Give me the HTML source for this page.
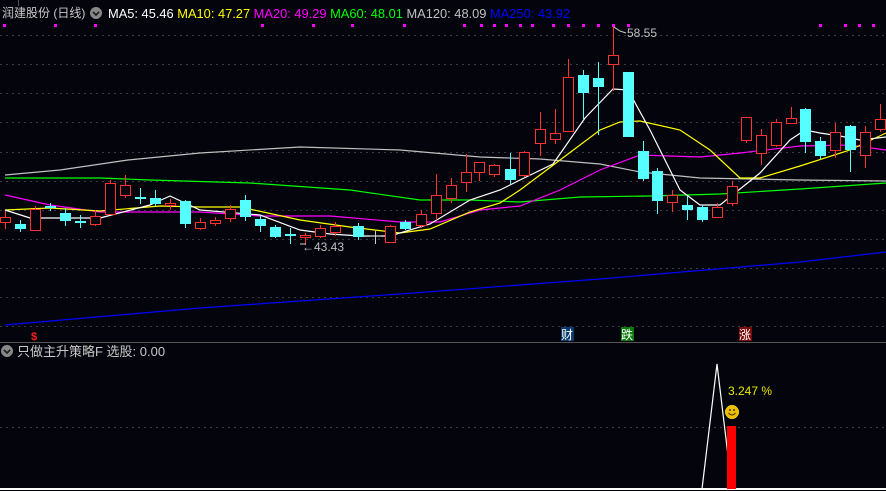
<!DOCTYPE html>
<html><head><meta charset="utf-8"><style>
html,body{margin:0;padding:0;background:#04040c;width:886px;height:491px;overflow:hidden}
svg{display:block}
text{font-family:"Liberation Sans","Noto Sans CJK SC",sans-serif}
</style></head><body>
<svg width="886" height="491" viewBox="0 0 886 491" xmlns="http://www.w3.org/2000/svg" shape-rendering="crispEdges">
<rect width="886" height="491" fill="#04040c"/>
<g stroke="#3a3a44" stroke-dasharray="2,4" stroke-width="1">
<line x1="0" y1="35.5" x2="886" y2="35.5"/><line x1="0" y1="64.5" x2="886" y2="64.5"/>
<line x1="0" y1="93.5" x2="886" y2="93.5"/><line x1="0" y1="122.5" x2="886" y2="122.5"/>
<line x1="0" y1="152.5" x2="886" y2="152.5"/><line x1="0" y1="181.5" x2="886" y2="181.5"/>
<line x1="0" y1="210.5" x2="886" y2="210.5"/><line x1="0" y1="239.5" x2="886" y2="239.5"/>
<line x1="0" y1="268.5" x2="886" y2="268.5"/><line x1="0" y1="297.5" x2="886" y2="297.5"/>
<line x1="0" y1="326.5" x2="886" y2="326.5"/><line x1="0" y1="427.5" x2="886" y2="427.5"/>
</g>
<line x1="0" y1="342.5" x2="886" y2="342.5" stroke="#555" />
<line x1="18.5" y1="0" x2="18.5" y2="6" stroke="#555"/>
<line x1="0" y1="489" x2="886" y2="489" stroke="#fff" stroke-width="2"/>
<g fill="#ff00ff">
<rect x="3" y="24" width="3" height="3"/><rect x="54" y="24" width="3" height="3"/><rect x="94" y="24" width="3" height="3"/><rect x="261" y="24" width="3" height="3"/><rect x="312" y="24" width="3" height="3"/><rect x="351" y="24" width="3" height="3"/><rect x="403" y="24" width="3" height="3"/><rect x="463" y="24" width="3" height="3"/><rect x="480" y="24" width="3" height="3"/><rect x="493" y="24" width="3" height="3"/><rect x="505" y="24" width="3" height="3"/><rect x="519" y="24" width="3" height="3"/><rect x="531" y="24" width="3" height="3"/><rect x="552" y="24" width="3" height="3"/><rect x="567" y="24" width="3" height="3"/><rect x="582" y="24" width="3" height="3"/><rect x="597" y="24" width="3" height="3"/><rect x="612" y="24" width="3" height="3"/><rect x="627" y="24" width="3" height="3"/><rect x="819" y="24" width="3" height="3"/><rect x="844" y="24" width="3" height="3"/><rect x="858" y="24" width="3" height="3"/><rect x="872" y="24" width="3" height="3"/>
</g>
<g fill="none" stroke-width="1.2" shape-rendering="auto">
<polyline stroke="#0000ff" points="5,325 200,308 400,294 600,279 800,262 886,252"/>
<polyline stroke="#c0c0c0" points="5,175 60,170 128,160 200,153 300,147 400,150 480,157 540,159 600,164 640,172 700,178 800,180 886,181"/>
<polyline stroke="#00ff00" points="5,178 100,178 150,180 250,183 350,190 420,200 470,200 520,202 580,197 650,196 720,194 800,189 886,183"/>
<polyline stroke="#ff00ff" points="5,195 50,205 100,212 150,212 200,212 260,216 330,216 400,222 440,222 480,210 520,206 560,190 600,170 640,155 700,157 740,153 800,146 850,145 886,150"/>
<polyline stroke="#ffff00" points="5,210 50,208 100,211 160,206 200,207 240,207 300,220 350,227 400,233 430,229 470,212 500,203 520,190 560,160 600,130 620,122 640,121 680,130 710,150 740,178 760,178 800,166 850,150 886,133"/>
<polyline stroke="#ffffff" points="5,210 30,218 100,218 150,205 170,196 200,210 260,215 300,230 330,234 360,236 390,236 430,224 470,200 500,190 520,180 553,164 585,118 613,89 628,90 650,130 680,190 700,205 720,205 760,173 790,140 805,130 820,133 840,136 860,140 886,137"/>
</g>
<g id="c"></g>
<g fill="none" stroke="#ccc" shape-rendering="auto">
<polyline points="614,27 620,31 626,33"/><polyline points="300,244 306,244"/>
</g>
<text x="627" y="37" fill="#c0c0c0" font-size="12">58.55</text>
<text x="314" y="251" fill="#c0c0c0" font-size="12">43.43</text>
<text x="302" y="251" fill="#c0c0c0" font-size="12">←</text>
<text x="31" y="340" fill="#ff2020" font-size="11" font-weight="bold">$</text>
<rect x="561" y="327" width="13" height="14" fill="#0a3a6a"/><text x="561" y="339" fill="#fff" font-size="12">财</text>
<rect x="621" y="327" width="13" height="14" fill="#0a7a0a"/><text x="621" y="339" fill="#fff" font-size="12">跌</text>
<rect x="739" y="327" width="13" height="14" fill="#7a0a0a"/><text x="739" y="339" fill="#fff" font-size="12">涨</text>
<text x="2" y="17" fill="#c8c8c8" font-size="12">润建股份 (日线)</text>
<circle cx="96" cy="13" r="6" fill="#888"/><polyline points="93,12 96,15 99,12" fill="none" stroke="#222" stroke-width="1.5"/>
<text x="108" y="18" font-size="13" textLength="462" lengthAdjust="spacingAndGlyphs"><tspan fill="#fff">MA5: 45.46 </tspan><tspan fill="#ffff00">MA10: 47.27 </tspan><tspan fill="#ff00ff">MA20: 49.29 </tspan><tspan fill="#00ff00">MA60: 48.01 </tspan><tspan fill="#c0c0c0">MA120: 48.09 </tspan><tspan fill="#0000ff">MA250: 43.92</tspan></text>
<circle cx="7" cy="351" r="6" fill="#888"/><polyline points="4,350 7,353 10,350" fill="none" stroke="#222" stroke-width="1.5"/>
<text x="17" y="356" fill="#c8c8c8" font-size="13">只做主升策略F  选股: 0.00</text>
<polyline points="702,489 717,364 732,489" fill="none" stroke="#fff" stroke-width="1.2" shape-rendering="auto"/>
<rect x="727" y="426" width="9" height="63" fill="#ff0000"/>
<text x="728" y="395" fill="#e8e800" font-size="12">3.247 %</text>
<circle cx="732" cy="412" r="7" fill="#e8c000"/>
<path d="M728.5 413 Q732 417 735.5 413" fill="none" stroke="#553300" stroke-width="1" shape-rendering="auto"/>
<circle cx="730" cy="410" r="0.9" fill="#553300"/><circle cx="734" cy="410" r="0.9" fill="#553300"/>
</svg>
<script>
var d=[
[5,217,222,1,211,229],[20,224,229,0,220,232],[35,209,230,1,206,231],[50,206,208,0,203,211],[65,213,221,0,208,226],[80,221,222,0,215,228],[95,216,224,1,210,226],[110,183,214,1,180,214],[125,185,195,1,175,198],[140,197,199,0,188,204],[155,198,204,0,190,206],[170,203,205,1,199,210],[185,201,224,0,200,228],[200,222,228,1,218,230],[215,220,223,1,217,226],[230,209,218,1,205,222],[245,200,217,0,195,221],[260,219,226,0,215,232],[275,227,237,0,225,238],[290,234,236,0,228,244],[305,235,237,1,233,245],[320,228,236,1,225,238],[335,226,232,1,222,236],[358,226,237,0,223,240],[375,236,237,2,231,244],[390,226,242,1,225,243],[405,222,229,0,220,230],[421,214,225,1,210,228],[436,195,213,1,174,220],[451,185,198,1,178,203],[466,172,182,1,154,192],[479,162,172,1,163,181],[494,165,174,1,164,177],[510,169,180,0,153,184],[524,152,175,1,151,177],[540,129,143,1,112,156],[555,133,139,1,109,144],[568,77,131,1,59,131],[583,75,93,0,70,119],[598,78,87,0,62,135],[613,55,64,1,27,91],[628,72,137,0,72,137],[643,151,179,0,141,181],[657,171,201,0,168,214],[672,195,202,1,190,212],[687,205,210,0,196,220],[702,207,220,0,205,222],[717,207,217,1,203,217],[732,186,203,1,181,206],[746,117,140,1,117,143],[761,135,153,1,129,165],[776,122,145,1,119,147],[791,118,123,1,107,123],[805,109,142,0,108,153],[820,141,156,0,137,159],[835,132,150,1,123,158],[850,126,150,0,125,172],[865,132,155,1,126,168],[880,119,129,1,104,132]];
var s='';d.forEach(function(c){var x=c[0],col=c[3]==1?'#ff3030':(c[3]==0?'#55ffff':'#ccc');
s+='<line x1="'+(x+.5)+'" y1="'+c[4]+'" x2="'+(x+.5)+'" y2="'+c[5]+'" stroke="'+col+'"/>';
if(c[3]==1)s+='<rect x="'+(x-4.5)+'" y="'+(c[1]+.5)+'" width="10" height="'+Math.max(1,c[2]-c[1])+'" fill="#04040c" stroke="'+col+'" stroke-width="1.3"/>';
else if(c[3]==0)s+='<rect x="'+(x-5)+'" y="'+c[1]+'" width="11" height="'+Math.max(2,c[2]-c[1])+'" fill="'+col+'"/>';
else s+='<line x1="'+(x-5)+'" y1="'+c[1]+'" x2="'+(x+6)+'" y2="'+c[1]+'" stroke="'+col+'"/>';});
document.getElementById('c').innerHTML=s;
</script>
</body></html>
